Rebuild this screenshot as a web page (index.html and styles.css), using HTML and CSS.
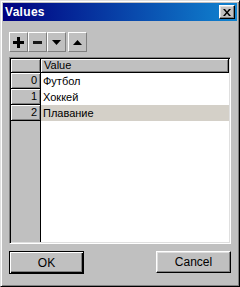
FILE: index.html
```html
<!DOCTYPE html>
<html lang="ru">
<head>
    <meta charset="UTF-8">
    <title>Values</title>
    <link rel="stylesheet" href="styles.css">
</head>
<body>
    <div class="window">
        <div class="titleBar">
            <span class="titleText">Values</span>
            <button class="closeButton" type="button">
                <svg width="8" height="7" viewBox="0 0 8 7"><path d="M0 0h2l2 2.5 2-2.5h2l-3 3.5 3 3.5h-2l-2-2.5-2 2.5h-2l3-3.5z" fill="#000"/></svg>
            </button>
        </div>
        <div class="content">
            <div class="toolbar">
                <button class="toolButton" type="button" title="Add">
                    <svg width="11" height="11" viewBox="0 0 11 11"><path d="M4 0h3v4h4v3h-4v4h-3v-4h-4v-3h4z" fill="#000"/></svg>
                </button>
                <button class="toolButton" type="button" title="Remove">
                    <svg width="9" height="3" viewBox="0 0 9 3"><rect width="9" height="3" fill="#1a1a1a"/></svg>
                </button>
                <button class="toolButton" type="button" title="Move down">
                    <svg width="9" height="5" viewBox="0 0 9 5"><path d="M0 0h9l-4.5 5z" fill="#000"/></svg>
                </button>
                <button class="toolButton upButton" type="button" title="Move up">
                    <svg width="9" height="5" viewBox="0 0 9 5"><path d="M0 5h9l-4.5-5z" fill="#000"/></svg>
                </button>
            </div>

            <div class="grid">
                <div class="corner"></div>
                <div class="colHeader">Value</div>

                <div class="rowHeader">0</div>
                <div class="cell">Футбол</div>
                <div class="rowHeader">1</div>
                <div class="cell">Хоккей</div>
                <div class="rowHeader">2</div>
                <div class="cell selected">Плавание</div>

                <div class="rowFiller"></div>
                <div class="cellFiller"></div>
            </div>

            <div class="dialogButtons">
                <button class="dialogButton default" type="button">OK</button>
                <button class="dialogButton" type="button">Cancel</button>
            </div>
        </div>
    </div>
</body>
</html>
```

FILE: styles.css
```css
* {
    box-sizing: border-box;
}

body {
    margin: 0;
    background: #c0c0c0;
    font-family: 'Liberation Sans', Arial, sans-serif;
    font-size: 11px;
    color: #000;
}

button {
    font-family: inherit;
    font-size: 11px;
    color: #000;
    margin: 0;
    padding: 0;
}

.window {
    width: 240px;
    height: 287px;
    background: #c0c0c0;
    border: 1px solid;
    border-color: #dfdfdf #000 #000 #dfdfdf;
    box-shadow: inset 1px 1px #fff, inset -1px -1px #808080;
    padding: 2px;
    display: flex;
    flex-direction: column;
}

.titleBar {
    height: 18px;
    background: linear-gradient(90deg, #000080, #1084d0);
    display: flex;
    align-items: center;
    justify-content: space-between;
    padding: 0 2px 0 2px;
}

.titleText {
    color: #fff;
    font-weight: bold;
    font-size: 12px;
    letter-spacing: 0.3px;
}

.closeButton {
    width: 16px;
    height: 14px;
    background: #c0c0c0;
    border: 1px solid;
    border-color: #fff #000 #000 #fff;
    box-shadow: inset -1px -1px #808080, inset 1px 1px #dfdfdf;
    display: flex;
    align-items: center;
    justify-content: center;
}

.content {
    flex: 1;
    display: flex;
    flex-direction: column;
    padding: 11px 6px 10px 6px;
}

.toolbar {
    display: flex;
    height: 20px;
}

.toolButton {
    width: 19px;
    height: 20px;
    background: #c0c0c0;
    border: 1px solid;
    border-color: #fff #808080 #808080 #fff;
    display: flex;
    align-items: center;
    justify-content: center;
}

.upButton {
    margin-left: 2px;
}

.grid {
    margin-top: 5px;
    height: 187px;
    display: grid;
    grid-template-columns: 30px 1fr;
    grid-template-rows: 14px 16px 16px 16px 1fr;
    border: 1px solid;
    border-color: #808080 #fff #fff #808080;
    box-shadow: inset 1px 1px #000, inset -1px -1px #dfdfdf;
    padding: 1px;
    background: #fff;
}

.corner,
.colHeader,
.rowHeader {
    background: #c0c0c0;
    border-right: 1px solid #000;
    border-bottom: 1px solid #000;
    box-shadow: inset 1px 1px #fff, inset -1px -1px #808080;
}

.colHeader {
    padding-left: 3px;
    line-height: 13px;
}

.rowHeader {
    text-align: right;
    padding-right: 3px;
    line-height: 15px;
}

.cell {
    padding-left: 2px;
    line-height: 16px;
    background: #fff;
}

.selected {
    background: #d4d0c8;
}

.rowFiller {
    background: #c0c0c0;
    border-right: 1px solid #000;
}

.cellFiller {
    background: #fff;
}

.dialogButtons {
    margin-top: 7px;
    display: flex;
    justify-content: space-between;
}

.dialogButton {
    width: 75px;
    height: 22px;
    background: #c0c0c0;
    border: 1px solid;
    border-color: #fff #000 #000 #fff;
    box-shadow: inset -1px -1px #808080, inset 1px 1px #dfdfdf;
    font-size: 12px;
}

/* default button: black frame round the raised face */
.default {
    height: 23px;
    border: 1px solid #000;
    box-shadow: inset 1px 1px #fff, inset -1px -1px #000, inset -2px -2px #808080;
}
```
